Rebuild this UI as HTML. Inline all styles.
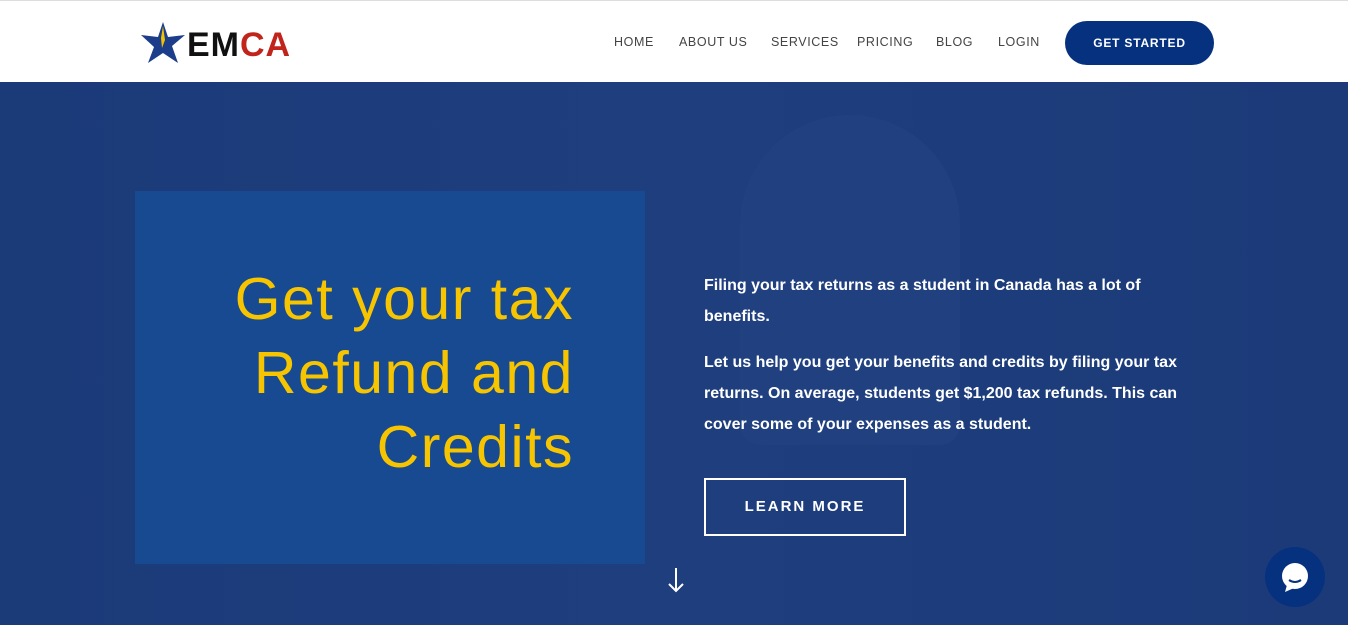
<!DOCTYPE html>
<html><head><style>
*{margin:0;padding:0;box-sizing:border-box}
body{width:1348px;height:625px;overflow:hidden;font-family:"Liberation Sans",sans-serif;background:#1d3a78;position:relative}
.top{position:absolute;top:0;left:0;width:1348px;height:82px;background:#fff;border-top:1px solid #ddd}
.logo{position:absolute;left:140px;top:19px}
.logo span{position:absolute;left:47px;top:6px;font-weight:bold;font-size:34px;letter-spacing:1px;white-space:nowrap}
nav{position:absolute;top:34px;left:614px;font-size:12.5px;color:#444;letter-spacing:.6px}
nav a{position:absolute;white-space:nowrap}
.btn{position:absolute;left:1065px;top:20px;width:149px;height:44px;border-radius:22px;background:#06317f;color:#fff;font-weight:bold;font-size:12px;letter-spacing:.8px;text-align:center;line-height:44px}
.hero{position:absolute;top:82px;left:0;width:1348px;height:543px;background:linear-gradient(90deg,#1b3a78 0%,#1e3e7e 50%,#1c3a78 100%)}
.photo{position:absolute;left:740px;top:115px;width:220px;height:330px;border-radius:110px 110px 20px 20px;background:#2a4a8a;opacity:.25}
.box{position:absolute;left:135px;top:191px;width:510px;height:373px;background:#174a90}
.h1{position:absolute;right:774px;top:262px;text-align:right;color:#f7c400;font-family:"Liberation Sans",sans-serif;font-size:59px;line-height:74px;letter-spacing:1.5px;white-space:nowrap}
.txt{position:absolute;left:704px;top:270px;width:490px;color:#fff;font-weight:bold;font-size:16px;line-height:31px}
.lm{position:absolute;left:704px;top:478px;width:202px;height:58px;border:2px solid #fff;color:#fff;font-weight:bold;font-size:15px;letter-spacing:2px;text-align:center;line-height:54px}
.arrow{position:absolute;left:666px;top:566px}
.chat{position:absolute;left:1265px;top:547px;width:60px;height:60px;border-radius:50%;background:#06317f}
</style></head><body>
<div class="top">
<div class="logo">
<svg width="46" height="46" viewBox="0 0 46 46"><polygon points="23,2 28,17 45,15 32,26 38,43 23,33 8,43 14,27 1,15 18,17" fill="#1b3d8a"/><polygon points="23,6 25,20 22,28 21,18" fill="#f2c200"/></svg>
<span><span style="position:static;color:#111">EM</span><span style="position:static;color:#c0241b">CA</span></span>
</div>
<nav><a style="left:0">HOME</a><a style="left:65px">ABOUT US</a><a style="left:157px">SERVICES</a><a style="left:243px">PRICING</a><a style="left:322px">BLOG</a><a style="left:384px">LOGIN</a></nav>
<div class="btn">GET STARTED</div>
</div>
<div class="hero"></div>
<div class="photo"></div>
<div class="box"></div>
<div class="h1">Get your tax<br>Refund and<br>Credits</div>
<div class="txt">Filing your tax returns as a student in Canada has a lot of benefits.<div style="height:15px"></div>Let us help you get your benefits and credits by filing your tax returns. On average, students get $1,200 tax refunds. This can cover some of your expenses as a student.</div>
<div class="lm">LEARN MORE</div>
<svg class="arrow" width="20" height="28"><path d="M10 2V25M3 18L10 25L17 18" stroke="#fff" stroke-width="2" fill="none"/></svg>
<div class="chat"><svg width="60" height="60"><circle cx="30" cy="29" r="13" fill="#fff"/><polygon points="22,38 20,45 29,41" fill="#fff"/><path d="M24 33 Q30 37 36 33" stroke="#06317f" stroke-width="2" fill="none"/></svg></div>
</body></html>
